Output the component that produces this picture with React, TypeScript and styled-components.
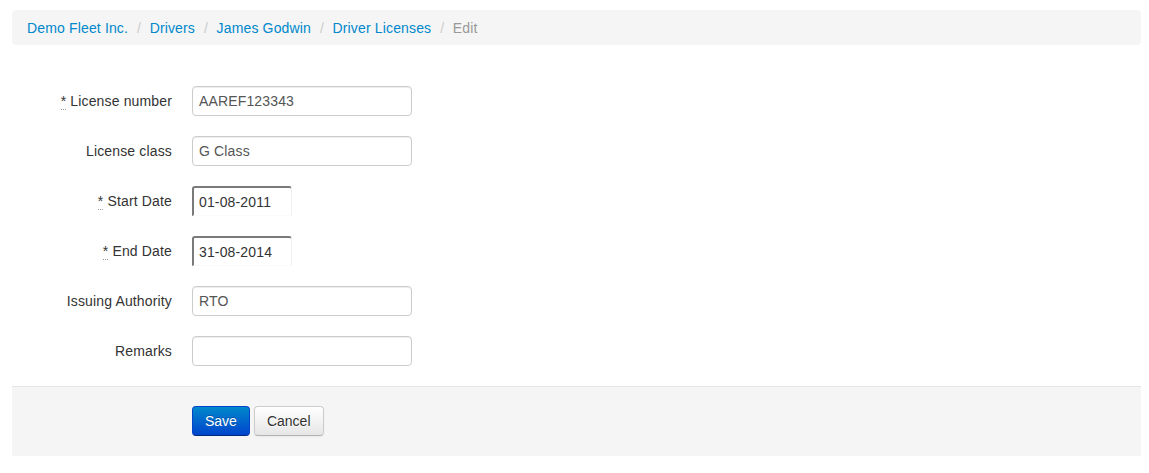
import React from "react";
import styled, { createGlobalStyle } from "styled-components";

const Global = createGlobalStyle`
  html, body { margin: 0; padding: 0; background: #fff; }
  body {
    font-family: "Liberation Sans", Arial, sans-serif;
    font-size: 14px;
    line-height: 20px;
    color: #333;
    letter-spacing: 0.15px;
  }
`;

const Page = styled.div`
  padding: 10px 8px 0 12px;
`;

const Breadcrumb = styled.ul`
  list-style: none;
  margin: 0 0 20px;
  padding: 8px 15px;
  background: #f5f5f5;
  border-radius: 4px;
  display: flex;
  align-items: center;
  height: 19px;
`;

const Crumb = styled.li<{ $active?: boolean }>`
  color: ${(p) => (p.$active ? "#999" : "#0088cc")};
  display: flex;
  align-items: center;
`;

const Divider = styled.span`
  color: #ccc;
  padding: 0 8.5px 0 9px;
`;

const Form = styled.form`
  margin: 0;
  padding-top: 21px;
`;

const Group = styled.div`
  display: flex;
  align-items: flex-start;
  margin-bottom: 20px;
`;

const Label = styled.label`
  width: 160px;
  flex: none;
  text-align: right;
  padding-top: 5px;
  margin-right: 20px;
`;

const Req = styled.abbr`
  text-decoration: none;
  border-bottom: 1px dotted #999;
  cursor: help;
  margin-right: 4px;
`;

const TextInput = styled.input`
  box-sizing: border-box;
  width: 220px;
  height: 30px;
  margin: 0;
  padding: 4px 6px;
  font-family: "Liberation Sans", Arial, sans-serif;
  font-size: 14px;
  line-height: 20px;
  letter-spacing: 0.15px;
  color: #555;
  background: #fff;
  border: 1px solid #ccc;
  border-radius: 4px;
  box-shadow: inset 0 1px 1px rgba(0, 0, 0, 0.075);
  outline: none;
`;

const DateInput = styled(TextInput)`
  width: 100px;
  height: 30px;
  padding: 3px 5px;
  border-width: 2px 1px 1px 2px;
  border-color: #7a7a7a #f0f0f0 #fafafa #7a7a7a;
  border-radius: 3px 3px 0 0;
  box-shadow: none;
  color: #333;
`;

const Actions = styled.div`
  margin-top: 0;
  padding: 19px 20px 20px 180px;
  background: #f5f5f5;
  border-top: 1px solid #e5e5e5;
  display: flex;
  gap: 4px;
`;

const Button = styled.button<{ $primary?: boolean }>`
  box-sizing: border-box;
  height: 30px;
  padding: 4px 12px;
  font-family: "Liberation Sans", Arial, sans-serif;
  font-size: 14px;
  line-height: 20px;
  letter-spacing: 0;
  border-radius: 4px;
  cursor: pointer;
  border: 1px solid;
  ${(p) =>
    p.$primary
      ? `
    color: #fff;
    text-shadow: 0 -1px 0 rgba(0,0,0,0.25);
    background: linear-gradient(to bottom, #0088cc, #0044cc);
    border-color: #0044cc #0044cc #002a80;
  `
      : `
    color: #333;
    text-shadow: 0 1px 1px rgba(255,255,255,0.75);
    background: linear-gradient(to bottom, #ffffff, #e6e6e6);
    border-color: #ccc #ccc #b3b3b3;
    box-shadow: inset 0 1px 0 rgba(255,255,255,.2), 0 1px 2px rgba(0,0,0,.05);
  `}
`;

const crumbs = ["Demo Fleet Inc.", "Drivers", "James Godwin", "Driver Licenses"];

type Field = { label: string; value: string; required?: boolean; date?: boolean };
const fields: Field[] = [
  { label: "License number", value: "AAREF123343", required: true },
  { label: "License class", value: "G Class" },
  { label: "Start Date", value: "01-08-2011", required: true, date: true },
  { label: "End Date", value: "31-08-2014", required: true, date: true },
  { label: "Issuing Authority", value: "RTO" },
  { label: "Remarks", value: "" },
];

export default function App() {
  return (
    <Page>
      <Global />
      <Breadcrumb>
        {crumbs.map((c) => (
          <Crumb key={c}>
            {c}
            <Divider>/</Divider>
          </Crumb>
        ))}
        <Crumb $active>Edit</Crumb>
      </Breadcrumb>
      <Form onSubmit={(e) => e.preventDefault()}>
        {fields.map((f) => (
          <Group key={f.label}>
            <Label>
              {f.required && <Req title="required">*</Req>}
              {f.label}
            </Label>
            {f.date ? (
              <DateInput defaultValue={f.value} />
            ) : (
              <TextInput defaultValue={f.value} />
            )}
          </Group>
        ))}
        <Actions>
          <Button $primary type="submit">Save</Button>
          <Button type="button">Cancel</Button>
        </Actions>
      </Form>
    </Page>
  );
}
